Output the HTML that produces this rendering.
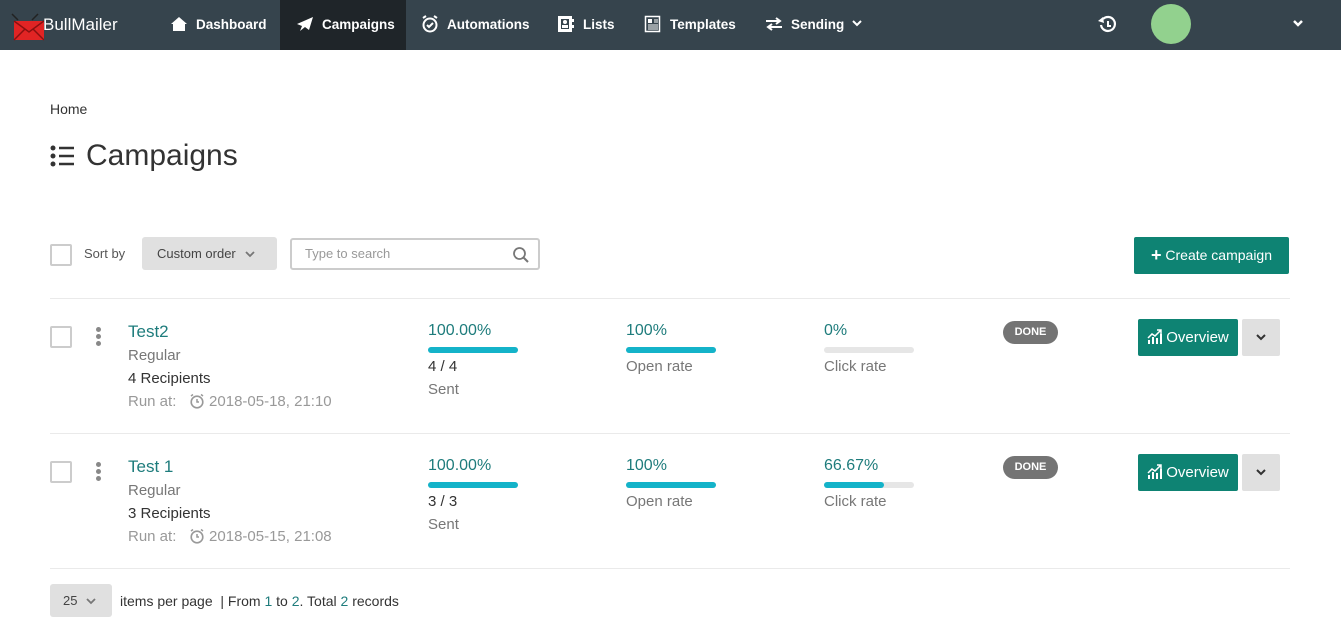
<!DOCTYPE html>
<html><head><meta charset="utf-8"><style>
*{box-sizing:border-box;margin:0;padding:0}
body{width:1341px;height:626px;background:#fff;font-family:"Liberation Sans",sans-serif;color:#333;position:relative;overflow:hidden}
.a{position:absolute;white-space:nowrap}
.nav{position:absolute;left:0;top:0;width:1341px;height:50px;background:#36444d}
.ni{position:absolute;top:0;height:50px;line-height:49px;color:#fff;font-weight:bold;font-size:13.5px}
.ni svg{vertical-align:middle;margin-right:8px;margin-top:-3px}
.cb{position:absolute;width:22px;height:22px;border:2px solid #ccc;border-radius:2px;background:#fff}
.teal{color:#1e7c7c}
.bar{position:absolute;height:6px;width:90px;border-radius:3px;background:#e6e6e6}
.bar i{display:block;height:6px;border-radius:3px;background:#14b3c9}
.g{color:#777}
.done{position:absolute;width:55px;height:23px;border-radius:12px;background:#747474;color:#fff;font-size:11px;font-weight:bold;text-align:center;line-height:23px}
.ov{position:absolute;width:100px;height:37px;background:#0e8373;color:#fff;font-size:15px;line-height:37px;text-align:center;border-radius:2px}
.ov svg{vertical-align:middle;margin-top:-4px;margin-right:3px}
.dd{position:absolute;width:38px;height:37px;background:#e0e0e0;border-radius:2px}
.dots{position:absolute;width:6px}
.dots b{display:block;width:5px;height:5px;border-radius:50%;background:#888;margin-bottom:2px}
.hr{position:absolute;left:50px;width:1240px;height:1px;background:#eaeaea}
.clk{vertical-align:middle;margin-top:-3px}
</style></head><body>
<div class="nav">
 <svg class="a" style="left:8px;top:12px" width="36" height="30" viewBox="0 0 36 30"><path d="M4 2 L10 8 M30 2 L24 8" stroke="#222" stroke-width="1.5"/><rect x="6" y="9" width="30" height="19" fill="#e12424"/><path d="M6 9 L21 20 L36 9 M6 28 L17 17 M36 28 L25 17" stroke="#8a1010" stroke-width="1.5" fill="none"/></svg>
 <div class="a" style="left:43px;top:15px;color:#fff;font-size:17px">BullMailer</div>
 <div class="ni" style="left:170px"><svg width="18" height="16" viewBox="0 0 18 16"><path d="M9 1 L1 8 L3 8 L3 15 L15 15 L15 8 L17 8Z" fill="#fff"/></svg>Dashboard</div>
 <div class="ni" style="left:280px;width:126px;background:#1f2529;padding-left:16px"><svg width="18" height="16" viewBox="0 0 18 16"><path d="M17 1 L1 8 L6 10 L4 15 L9 11 L13 14Z" fill="#fff"/></svg>Campaigns</div>
 <div class="ni" style="left:421px"><svg width="18" height="18" viewBox="0 0 18 18"><circle cx="9" cy="10" r="6.5" stroke="#fff" stroke-width="2" fill="none"/><path d="M6 10 L8 12 L12 8 M2 3 L5 1 M16 3 L13 1" stroke="#fff" stroke-width="2" fill="none"/></svg>Automations</div>
 <div class="ni" style="left:557px"><svg width="18" height="18" viewBox="0 0 18 18"><rect x="1" y="1" width="14" height="16" fill="#fff"/><rect x="4" y="4" width="8" height="10" fill="#36444d"/><circle cx="8" cy="7" r="2" fill="#fff"/><rect x="5" y="10" width="6" height="3" fill="#fff"/><rect x="15" y="4" width="2" height="3" fill="#fff"/><rect x="15" y="10" width="2" height="3" fill="#fff"/></svg>Lists</div>
 <div class="ni" style="left:644px"><svg width="18" height="18" viewBox="0 0 18 18"><rect x="1.5" y="1.5" width="14" height="15" stroke="#fff" stroke-width="1.5" fill="none"/><rect x="4" y="4" width="4" height="4" fill="#fff"/><path d="M10 5h4M10 7h4M4 10h10M4 12h10M4 14h10" stroke="#fff"/></svg>Templates</div>
 <div class="ni" style="left:765px"><svg width="18" height="16" viewBox="0 0 18 16"><path d="M1 5 H14 M11 2 L15 5 L11 8 M17 11 H4 M7 8 L3 11 L7 14" stroke="#fff" stroke-width="2" fill="none"/></svg>Sending <svg width="10" height="7" viewBox="0 0 10 7" style="margin-left:4px;margin-right:0"><path d="M1 1L5 5L9 1" stroke="#fff" stroke-width="2" fill="none"/></svg></div>
 <svg class="a" style="left:1097px;top:15px" width="20" height="19" viewBox="0 0 20 19"><path d="M4 10 A7 7 0 1 0 6 4" stroke="#fff" stroke-width="2.2" fill="none"/><path d="M1 6 L6 2 L7 8Z" fill="#fff"/><path d="M11 6 V11 H14" stroke="#fff" stroke-width="2" fill="none"/></svg>
 <div class="a" style="left:1151px;top:4px;width:40px;height:40px;border-radius:50%;background:#92d18e"></div>
 <svg class="a" style="left:1292px;top:19px" width="12" height="9" viewBox="0 0 12 9"><path d="M2 2 L6 6 L10 2" stroke="#fff" stroke-width="2.5" fill="none"/></svg>
</div>

<div class="a" style="left:50px;top:101px;font-size:14px;color:#333">Home</div>
<svg class="a" style="left:50px;top:145px" width="25" height="22" viewBox="0 0 25 22"><circle cx="3" cy="3" r="2.5" fill="#333"/><circle cx="3" cy="11" r="2.5" fill="#333"/><circle cx="3" cy="19" r="2.5" fill="#333"/><path d="M9 3H24M9 11H24M9 19H24" stroke="#333" stroke-width="2.5"/></svg>
<div class="a" style="left:86px;top:139px;font-size:30px;color:#333">Campaigns</div>

<div class="cb" style="left:50px;top:244px"></div>
<div class="a" style="left:84px;top:246px;font-size:13px;color:#555">Sort by</div>
<div class="a" style="left:142px;top:237px;width:135px;height:33px;background:#e0e0e0;border-radius:3px;font-size:13px;line-height:33px;padding-left:15px;color:#444">Custom order <svg width="10" height="7" viewBox="0 0 10 7" style="margin-left:6px"><path d="M1 1L5 5L9 1" stroke="#777" stroke-width="1.8" fill="none"/></svg></div>
<div class="a" style="left:290px;top:238px;width:250px;height:32px;border:2px solid #ccc;border-radius:3px;font-size:13px;line-height:28px;padding-left:13px;color:#999">Type to search
 <svg style="position:absolute;right:8px;top:6px" width="18" height="18" viewBox="0 0 18 18"><circle cx="7.5" cy="7.5" r="5.5" stroke="#777" stroke-width="1.8" fill="none"/><path d="M11.5 11.5L16 16" stroke="#777" stroke-width="2"/></svg></div>
<div class="a" style="left:1134px;top:237px;width:155px;height:37px;background:#0e8373;color:#fff;font-size:14px;line-height:37px;text-align:center;border-radius:2px"><b style="font-size:18px;vertical-align:-1px">+</b> Create campaign</div>

<div class="hr" style="top:298px"></div>
<div class="hr" style="top:433px"></div>
<div class="hr" style="top:568px"></div>

<!-- row 1 -->
<div class="cb" style="left:50px;top:326px"></div>
<div class="dots" style="left:96px;top:327px"><b></b><b></b><b></b></div>
<div class="a teal" style="left:128px;top:322px;font-size:17px">Test2</div>
<div class="a g" style="left:128px;top:347px;font-size:15px">Regular</div>
<div class="a" style="left:128px;top:370px;font-size:15px;color:#333">4 Recipients</div>
<div class="a" style="left:128px;top:393px;font-size:15px;color:#999">Run at: &nbsp;&nbsp;<svg class="clk" width="16" height="16" viewBox="0 0 16 16"><circle cx="8" cy="9" r="5.8" stroke="#999" stroke-width="1.6" fill="none"/><path d="M8 6V9H10M2 3L4 1.5M14 3L12 1.5" stroke="#999" stroke-width="1.5" fill="none"/></svg> 2018-05-18, 21:10</div>
<div class="a teal" style="left:428px;top:322px;font-size:16px">100.00%</div>
<div class="bar" style="left:428px;top:347px"><i style="width:100%"></i></div>
<div class="a" style="left:428px;top:358px;font-size:15px;color:#333">4 / 4</div>
<div class="a g" style="left:428px;top:381px;font-size:15px">Sent</div>
<div class="a teal" style="left:626px;top:322px;font-size:16px">100%</div>
<div class="bar" style="left:626px;top:347px"><i style="width:100%"></i></div>
<div class="a g" style="left:626px;top:358px;font-size:15px">Open rate</div>
<div class="a teal" style="left:824px;top:322px;font-size:16px">0%</div>
<div class="bar" style="left:824px;top:347px"><i style="width:0"></i></div>
<div class="a g" style="left:824px;top:358px;font-size:15px">Click rate</div>
<div class="done" style="left:1003px;top:321px">DONE</div>
<div class="ov" style="left:1138px;top:319px"><svg width="16" height="15" viewBox="0 0 16 15"><path d="M1 15V11H3V15ZM5 15V8H7V15ZM9 15V9H11V15ZM13 15V5H15V15Z" fill="#fff"/><path d="M1 9L5 5L8 7L14 1M10 1H14V5" stroke="#fff" stroke-width="1.5" fill="none"/></svg>Overview</div>
<div class="dd" style="left:1242px;top:319px"><svg style="position:absolute;left:14px;top:15px" width="10" height="7" viewBox="0 0 10 7"><path d="M1 1L5 5L9 1" stroke="#333" stroke-width="2" fill="none"/></svg></div>

<!-- row 2 -->
<div class="cb" style="left:50px;top:461px"></div>
<div class="dots" style="left:96px;top:462px"><b></b><b></b><b></b></div>
<div class="a teal" style="left:128px;top:457px;font-size:17px">Test 1</div>
<div class="a g" style="left:128px;top:482px;font-size:15px">Regular</div>
<div class="a" style="left:128px;top:505px;font-size:15px;color:#333">3 Recipients</div>
<div class="a" style="left:128px;top:528px;font-size:15px;color:#999">Run at: &nbsp;&nbsp;<svg class="clk" width="16" height="16" viewBox="0 0 16 16"><circle cx="8" cy="9" r="5.8" stroke="#999" stroke-width="1.6" fill="none"/><path d="M8 6V9H10M2 3L4 1.5M14 3L12 1.5" stroke="#999" stroke-width="1.5" fill="none"/></svg> 2018-05-15, 21:08</div>
<div class="a teal" style="left:428px;top:457px;font-size:16px">100.00%</div>
<div class="bar" style="left:428px;top:482px"><i style="width:100%"></i></div>
<div class="a" style="left:428px;top:493px;font-size:15px;color:#333">3 / 3</div>
<div class="a g" style="left:428px;top:516px;font-size:15px">Sent</div>
<div class="a teal" style="left:626px;top:457px;font-size:16px">100%</div>
<div class="bar" style="left:626px;top:482px"><i style="width:100%"></i></div>
<div class="a g" style="left:626px;top:493px;font-size:15px">Open rate</div>
<div class="a teal" style="left:824px;top:457px;font-size:16px">66.67%</div>
<div class="bar" style="left:824px;top:482px"><i style="width:66.67%"></i></div>
<div class="a g" style="left:824px;top:493px;font-size:15px">Click rate</div>
<div class="done" style="left:1003px;top:456px">DONE</div>
<div class="ov" style="left:1138px;top:454px"><svg width="16" height="15" viewBox="0 0 16 15"><path d="M1 15V11H3V15ZM5 15V8H7V15ZM9 15V9H11V15ZM13 15V5H15V15Z" fill="#fff"/><path d="M1 9L5 5L8 7L14 1M10 1H14V5" stroke="#fff" stroke-width="1.5" fill="none"/></svg>Overview</div>
<div class="dd" style="left:1242px;top:454px"><svg style="position:absolute;left:14px;top:15px" width="10" height="7" viewBox="0 0 10 7"><path d="M1 1L5 5L9 1" stroke="#333" stroke-width="2" fill="none"/></svg></div>

<div class="a" style="left:50px;top:584px;width:62px;height:33px;background:#e0e0e0;border-radius:3px;font-size:13px;line-height:33px;padding-left:13px;color:#444">25 <svg width="10" height="7" viewBox="0 0 10 7" style="margin-left:5px"><path d="M1 1L5 5L9 1" stroke="#777" stroke-width="1.8" fill="none"/></svg></div>
<div class="a" style="left:120px;top:593px;font-size:14px;color:#333">items per page &nbsp;| From <span class="teal">1</span> to <span class="teal">2</span>. Total <span class="teal">2</span> records</div>
</body></html>
